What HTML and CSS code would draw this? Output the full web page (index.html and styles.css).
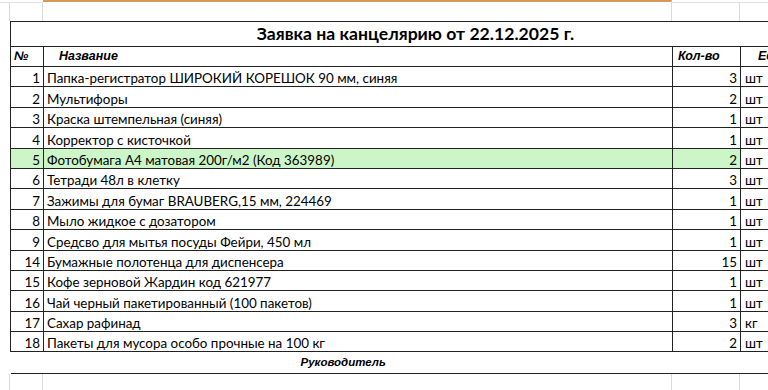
FILE: index.html
```html
<!DOCTYPE html>
<html lang="ru">
<head>
<meta charset="utf-8">
<title>Заявка на канцелярию</title>
<link rel="stylesheet" href="styles.css">
</head>
<body>
<div class="sheet">
  <div class="grid-row top">
    <div class="gcell g0"></div><div class="gcell g1"></div><div class="gcell g2 sel"></div><div class="gcell g3"></div><div class="gcell g4"></div>
  </div>
  <table class="req">
    <colgroup><col class="w-num"><col class="w-name"><col class="w-qty"><col class="w-unit"></colgroup>
    <tr class="title"><td colspan="4">Заявка на канцелярию от 22.12.2025 г.</td></tr>
    <tr class="head"><th class="h-num">№</th><th class="h-name">Название</th><th class="h-qty">Кол-во</th><th class="h-unit">Ед</th></tr>
    <tr><td class="num">1</td><td class="name">Папка-регистратор ШИРОКИЙ КОРЕШОК 90 мм, синяя</td><td class="qty">3</td><td class="unit">шт</td></tr>
    <tr><td class="num">2</td><td class="name">Мультифоры</td><td class="qty">2</td><td class="unit">шт</td></tr>
    <tr><td class="num">3</td><td class="name">Краска штемпельная (синяя)</td><td class="qty">1</td><td class="unit">шт</td></tr>
    <tr><td class="num">4</td><td class="name">Корректор с кисточкой</td><td class="qty">1</td><td class="unit">шт</td></tr>
    <tr class="hl"><td class="num">5</td><td class="name">Фотобумага А4 матовая 200г/м2 (Код 363989)</td><td class="qty">2</td><td class="unit">шт</td></tr>
    <tr><td class="num">6</td><td class="name">Тетради 48л в клетку</td><td class="qty">3</td><td class="unit">шт</td></tr>
    <tr><td class="num">7</td><td class="name">Зажимы для бумаг BRAUBERG,15 мм, 224469</td><td class="qty">1</td><td class="unit">шт</td></tr>
    <tr><td class="num">8</td><td class="name">Мыло жидкое с дозатором</td><td class="qty">1</td><td class="unit">шт</td></tr>
    <tr><td class="num">9</td><td class="name">Средсво для мытья посуды Фейри, 450 мл</td><td class="qty">1</td><td class="unit">шт</td></tr>
    <tr><td class="num">14</td><td class="name">Бумажные полотенца для диспенсера</td><td class="qty">15</td><td class="unit">шт</td></tr>
    <tr><td class="num">15</td><td class="name">Кофе зерновой Жардин код 621977</td><td class="qty">1</td><td class="unit">шт</td></tr>
    <tr><td class="num">16</td><td class="name">Чай черный пакетированный (100 пакетов)</td><td class="qty">1</td><td class="unit">шт</td></tr>
    <tr><td class="num">17</td><td class="name">Сахар рафинад</td><td class="qty">3</td><td class="unit">кг</td></tr>
    <tr><td class="num">18</td><td class="name">Пакеты для мусора особо прочные на 100 кг</td><td class="qty">2</td><td class="unit">шт</td></tr>
    <tr class="foot"><td colspan="4">Руководитель</td></tr>
  </table>
  <div class="grid-row bottom">
    <div class="gcell g0"></div><div class="gcell g1"></div><div class="gcell g2"></div><div class="gcell g3"></div><div class="gcell g4"></div>
  </div>
</div>
</body>
</html>
```

FILE: styles.css
```css
html, body {
  margin: 0;
  padding: 0;
  background: #ffffff;
}
body {
  width: 768px;
  height: 390px;
  overflow: hidden;
}
.sheet {
  width: 840px;
}
.grid-row {
  display: flex;
}
.grid-row.top {
  height: 21px;
}
.grid-row.bottom {
  height: 40px;
}
.gcell {
  box-sizing: border-box;
  border-right: 1px solid #dadada;
  flex: none;
}
.grid-row.top .gcell {
  margin-top: 2px;
  border-top: 1px solid #e2e2e2;
}
.grid-row.top .gcell.sel {
  margin-top: 0;
  border-top: 2px solid #d9985a;
}
.g0 { width: 10px; }
.g1 { width: 33px; }
.g2 { width: 629px; }
.g3 { width: 68px; }
.g4 { width: 100px; }

.req {
  margin-left: 10px;
  border-collapse: collapse;
  table-layout: fixed;
  width: 810px;
  font-family: Lato, "Open Sans", sans-serif;
  font-size: 13.4px;
  color: #000;
}
.w-num { width: 33px; }
.w-name { width: 629px; }
.w-qty { width: 68px; }
.w-unit { width: 80px; }

.req td, .req th {
  border: 1px solid #222;
  padding: 0 3px 1px;
  white-space: nowrap;
  overflow: hidden;
  height: 18.4px;
  line-height: 14px;
  vertical-align: bottom;
}
.req .title td {
  height: 24px;
  line-height: 24px;
  padding-bottom: 0;
  vertical-align: middle;
  text-align: center;
  font-weight: bold;
  font-size: 17.6px;
}
.req th {
  height: 19px;
  line-height: 19px;
  padding-bottom: 0;
  vertical-align: middle;
  font-family: "Liberation Sans", Arial, sans-serif;
  font-size: 12.5px;
  font-weight: bold;
  font-style: italic;
  text-align: left;
}
.req .h-num { padding-left: 3px; }
.req .h-name { padding-left: 15px; }
.req .h-qty { padding-left: 5px; }
.req .h-unit { padding-left: 17px; }
.num, .qty { text-align: right; }
.req .unit { padding-left: 4px; }
.hl .num, .hl .name, .hl .qty {
  background: #ccf6c8;
}
.req .foot td {
  border-left: none;
  border-right: none;
  height: 21px;
  line-height: 21px;
  padding-bottom: 0;
  vertical-align: middle;
  font-family: "Liberation Sans", Arial, sans-serif;
  font-size: 11.5px;
  font-weight: bold;
  font-style: italic;
  padding-left: 290px;
}
```
